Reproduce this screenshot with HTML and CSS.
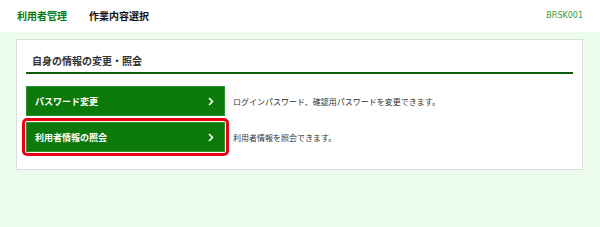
FILE: index.html
```html
<!DOCTYPE html>
<html lang="ja">
<head>
    <meta charset="UTF-8">
    <meta name="viewport" content="width=device-width, initial-scale=1.0">
    <title>作業内容選択</title>
    <link rel="stylesheet" href="styles.css">
</head>
<body>
    <div class="header">
        <div class="crumbs">
            <span class="crumb-main">利用者管理</span>
            <span class="crumb-sub">作業内容選択</span>
        </div>
        <div class="screen-id">BRSK001</div>
    </div>
    <div class="main">
        <div class="card">
            <h2 class="card-title">自身の情報の変更・照会</h2>
            <div class="menu">
                <div class="menu-row">
                    <a class="menu-btn" href="#">
                        <span>パスワード変更</span>
                        <svg class="chevron" width="6" height="9" viewBox="0 0 6 9"><polyline points="1,1 4.5,4.5 1,8" fill="none" stroke="#fff" stroke-width="1.6"/></svg>
                    </a>
                    <p class="menu-desc">ログインパスワード、確認用パスワードを変更できます。</p>
                </div>
                <div class="menu-row">
                    <div class="mark">
                        <a class="menu-btn" href="#">
                            <span>利用者情報の照会</span>
                            <svg class="chevron" width="6" height="9" viewBox="0 0 6 9"><polyline points="1,1 4.5,4.5 1,8" fill="none" stroke="#fff" stroke-width="1.6"/></svg>
                        </a>
                    </div>
                    <p class="menu-desc">利用者情報を照会できます。</p>
                </div>
            </div>
        </div>
    </div>
</body>
</html>
```

FILE: styles.css
```css
body {
    margin: 0;
    background: #edfded;
    font-family: 'Noto Sans CJK JP', 'Noto Sans', sans-serif;
    color: #333;
}

.header {
    height: 32px;
    background: #fff;
    display: flex;
    justify-content: space-between;
    align-items: center;
    padding: 0 17px;
    box-sizing: border-box;
}

.crumbs {
    display: flex;
    gap: 22px;
    font-size: 10px;
    font-weight: bold;
    margin-top: -2px;
}

.crumb-main {
    color: #0a7a0a;
}

.crumb-sub {
    color: #111;
}

.screen-id {
    font-family: 'DejaVu Sans', sans-serif;
    font-size: 8px;
    color: #3a9a3a;
    margin-top: -2px;
}

.main {
    padding: 7px 17px 0 16px;
}

.card {
    background: #fff;
    border: 1px solid #dcdcdc;
    box-shadow: 0 2px 0 #cfd6cf;
    padding: 0 9px 17px;
}

.card-title {
    margin: 0;
    padding: 13px 6px 3px;
    font-size: 10px;
    line-height: 16px;
    color: #333;
    border-bottom: 2px solid #0b5e0b;
}

.menu {
    margin-top: 12px;
    display: flex;
    flex-direction: column;
    gap: 6px;
}

.menu-row {
    display: flex;
    align-items: center;
    gap: 8px;
}

.menu-btn {
    width: 199px;
    height: 30px;
    box-sizing: border-box;
    background: #0b7a0b;
    border: 1px solid #2f8f2f;
    color: #fff;
    text-decoration: none;
    font-size: 9px;
    font-weight: bold;
    display: flex;
    justify-content: space-between;
    align-items: center;
    padding: 0 10px 0 8px;
}

.mark {
    border: 3px solid #e60012;
    border-radius: 5px;
    padding: 1px;
    margin: -4px;
}

.menu-desc {
    margin: 0;
    font-size: 8px;
    color: #333;
}
```
